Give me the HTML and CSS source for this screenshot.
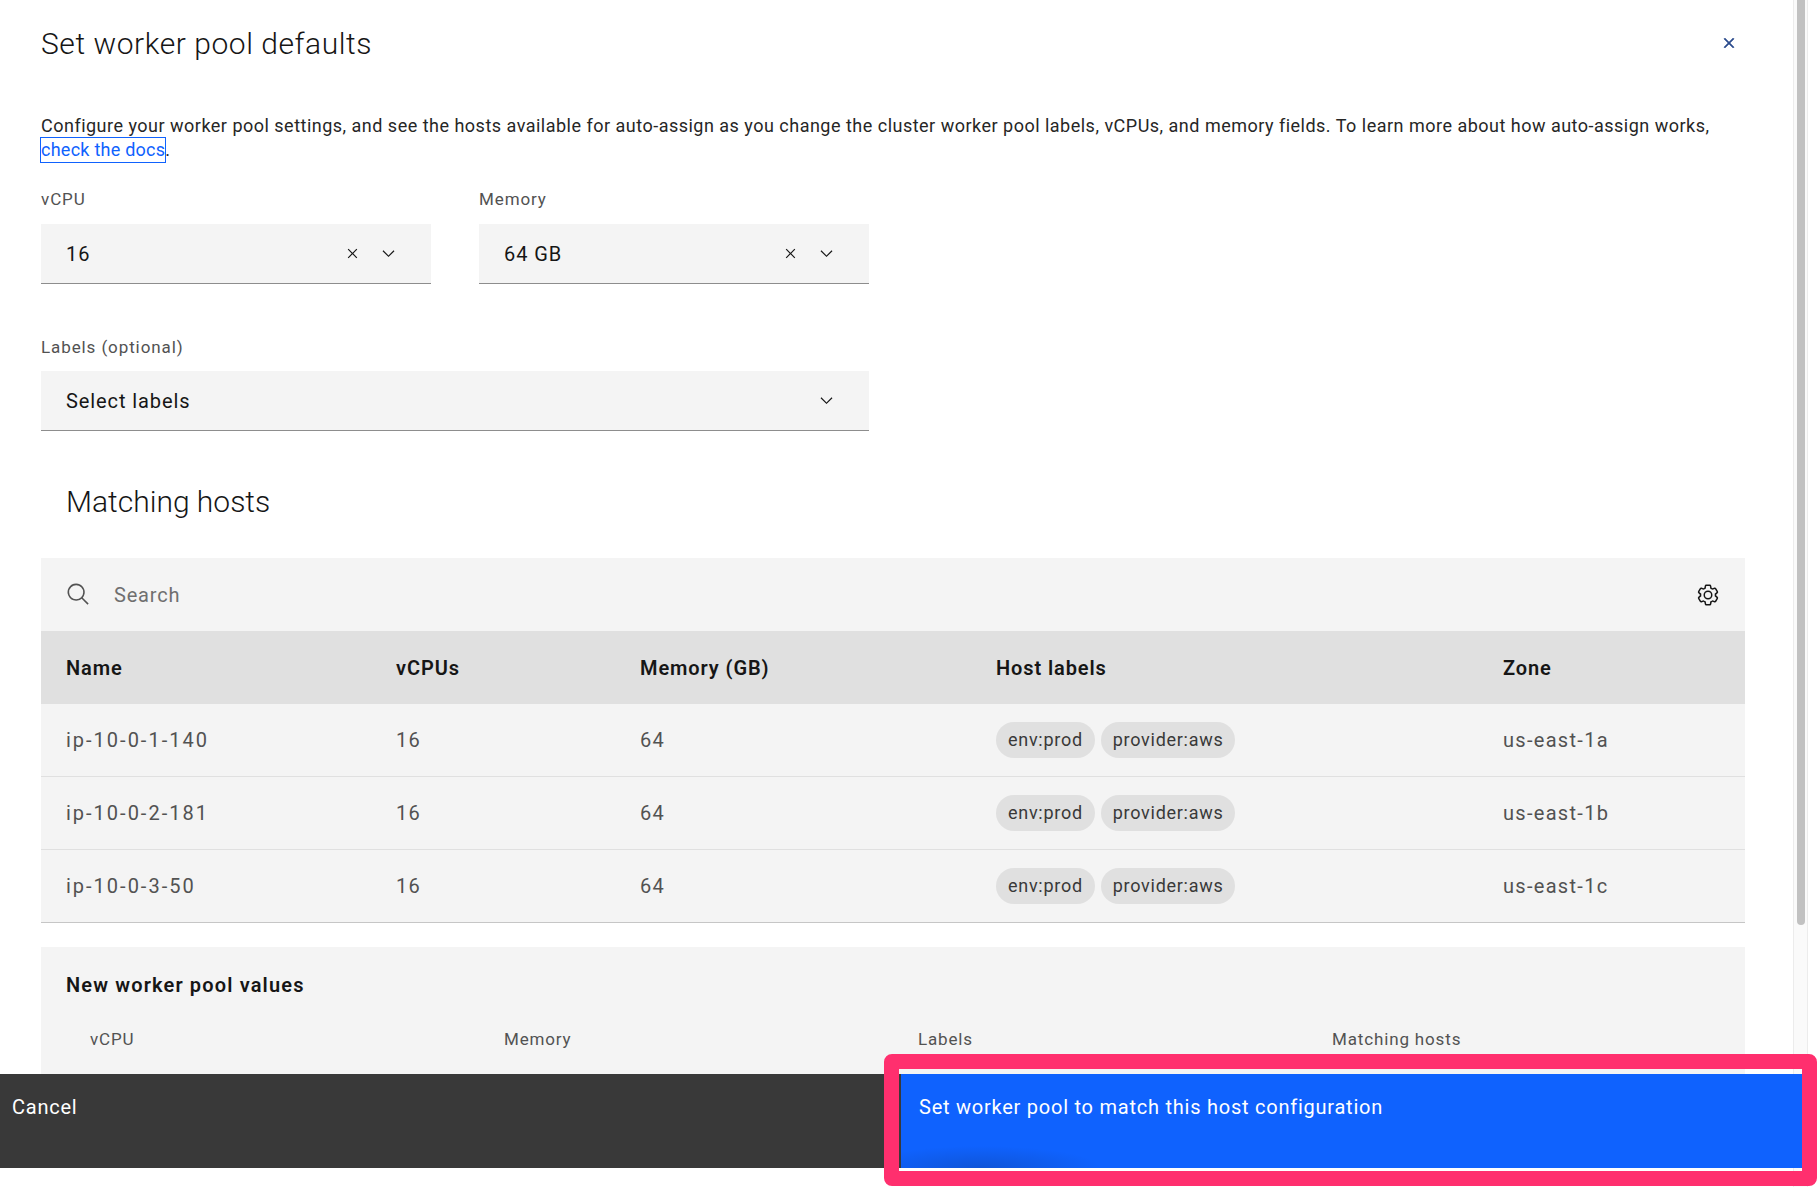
FILE: index.html
```html
<!DOCTYPE html>
<html>
<head>
    <title>Set worker pool defaults</title>
    <link rel="stylesheet" href="styles.css">
</head>
<body>
    <div class="modal">
        <div class="content">
            <div class="modal-head">
                <h1>Set worker pool defaults</h1>
                <svg class="close-icon" viewBox="0 0 32 32"><path d="M24 9.4L22.6 8 16 14.6 9.4 8 8 9.4 14.6 16 8 22.6 9.4 24 16 17.4 22.6 24 24 22.6 17.4 16 24 9.4z"/></svg>
            </div>
            <p class="intro">Configure your worker pool settings, and see the hosts available for auto-assign as you change the cluster worker pool labels, vCPUs, and memory fields. To learn more about how auto-assign works, <a class="docs-link" href="#">check the docs</a>.</p>

            <div class="field-row">
                <div class="field">
                    <label class="field-label">vCPU</label>
                    <div class="select">
                        <span class="select-value">16</span>
                        <svg class="small-icon" viewBox="0 0 32 32"><path d="M24 9.4L22.6 8 16 14.6 9.4 8 8 9.4 14.6 16 8 22.6 9.4 24 16 17.4 22.6 24 24 22.6 17.4 16 24 9.4z"/></svg>
                        <svg class="small-icon" viewBox="0 0 32 32"><path d="M16 22L6 12l1.4-1.4L16 19.2l8.6-8.6L26 12z"/></svg>
                    </div>
                </div>
                <div class="field">
                    <label class="field-label">Memory</label>
                    <div class="select">
                        <span class="select-value">64 GB</span>
                        <svg class="small-icon" viewBox="0 0 32 32"><path d="M24 9.4L22.6 8 16 14.6 9.4 8 8 9.4 14.6 16 8 22.6 9.4 24 16 17.4 22.6 24 24 22.6 17.4 16 24 9.4z"/></svg>
                        <svg class="small-icon" viewBox="0 0 32 32"><path d="M16 22L6 12l1.4-1.4L16 19.2l8.6-8.6L26 12z"/></svg>
                    </div>
                </div>
            </div>

            <div class="field field-wide">
                <label class="field-label">Labels (optional)</label>
                <div class="select">
                    <span class="select-value">Select labels</span>
                    <svg class="small-icon" viewBox="0 0 32 32"><path d="M16 22L6 12l1.4-1.4L16 19.2l8.6-8.6L26 12z"/></svg>
                </div>
            </div>

            <h2 class="section-title">Matching hosts</h2>

            <div class="toolbar">
                <svg class="search-icon" viewBox="0 0 32 32"><path d="M29,27.5859l-7.5521-7.5521a11.0177,11.0177,0,1,0-1.4141,1.4141L27.5859,29ZM4,13a9,9,0,1,1,9,9A9.01,9.01,0,0,1,4,13Z"/></svg>
                <span class="search-text">Search</span>
                <svg class="gear-icon" viewBox="0 0 32 32"><path d="M27,16.76c0-.25,0-.5,0-.76s0-.51,0-.77l1.92-1.68A2,2,0,0,0,29.3,11L26.94,7a2,2,0,0,0-1.73-1,2,2,0,0,0-.64.1l-2.43.82a11.35,11.35,0,0,0-1.31-.75l-.51-2.52a2,2,0,0,0-2-1.61H13.64a2,2,0,0,0-2,1.61l-.51,2.52a11.48,11.48,0,0,0-1.32.75L7.43,6.06A2,2,0,0,0,6.79,6,2,2,0,0,0,5.06,7L2.7,11a2,2,0,0,0,.41,2.51L5,15.24c0,.25,0,.5,0,.76s0,.51,0,.77L3.11,18.45A2,2,0,0,0,2.7,21L5.06,25a2,2,0,0,0,1.73,1,2,2,0,0,0,.64-.1l2.43-.82a11.35,11.35,0,0,0,1.31.75l.51,2.52a2,2,0,0,0,2,1.61h4.72a2,2,0,0,0,2-1.61l.51-2.52a11.48,11.48,0,0,0,1.32-.75l2.42.82a2,2,0,0,0,.64.1,2,2,0,0,0,1.73-1L29.3,21a2,2,0,0,0-.41-2.51ZM25.21,24l-3.43-1.16a8.86,8.86,0,0,1-2.71,1.57L18.36,28H13.64l-.71-3.55a9.36,9.36,0,0,1-2.7-1.57L6.79,24,4.43,20l2.72-2.4a8.9,8.9,0,0,1,0-3.13L4.43,12,6.79,8l3.43,1.16a8.86,8.86,0,0,1,2.71-1.57L13.64,4h4.72l.71,3.55a9.36,9.36,0,0,1,2.7,1.57L25.21,8,27.57,12l-2.72,2.4a8.9,8.9,0,0,1,0,3.13L27.57,20Z"/><path d="M16,22a6,6,0,1,1,6-6A5.94,5.94,0,0,1,16,22Zm0-10a3.91,3.91,0,0,0-4,4,3.91,3.91,0,0,0,4,4,3.91,3.91,0,0,0,4-4A3.91,3.91,0,0,0,16,12Z"/></svg>
            </div>

            <table class="hosts">
                <colgroup>
                    <col class="col-name"><col class="col-cpu"><col class="col-mem"><col class="col-labels"><col class="col-zone">
                </colgroup>
                <thead>
                    <tr><th>Name</th><th>vCPUs</th><th>Memory (GB)</th><th>Host labels</th><th>Zone</th></tr>
                </thead>
                <tbody>
                    <tr>
                        <td class="host-name">ip-10-0-1-140</td><td>16</td><td>64</td>
                        <td><div class="tags"><span class="tag">env:prod</span><span class="tag">provider:aws</span></div></td>
                        <td>us-east-1a</td>
                    </tr>
                    <tr>
                        <td class="host-name">ip-10-0-2-181</td><td>16</td><td>64</td>
                        <td><div class="tags"><span class="tag">env:prod</span><span class="tag">provider:aws</span></div></td>
                        <td>us-east-1b</td>
                    </tr>
                    <tr>
                        <td class="host-name">ip-10-0-3-50</td><td>16</td><td>64</td>
                        <td><div class="tags"><span class="tag">env:prod</span><span class="tag">provider:aws</span></div></td>
                        <td>us-east-1c</td>
                    </tr>
                </tbody>
            </table>

            <div class="values">
                <h3>New worker pool values</h3>
                <div class="values-grid">
                    <span>vCPU</span><span>Memory</span><span>Labels</span><span>Matching hosts</span>
                </div>
            </div>
        </div>

        <div class="scrollbar"><div class="thumb"></div></div>

        <div class="footer">
            <button class="btn btn-cancel">Cancel</button>
            <button class="btn btn-primary">Set worker pool to match this host configuration</button>
        </div>
        <div class="highlight"></div>
    </div>
</body>
</html>
```

FILE: styles.css
```css
* {
    box-sizing: border-box;
}

html, body {
    margin: 0;
    height: 100%;
    background-color: #fff;
    font-family: "Roboto", "Liberation Sans", sans-serif;
    color: #161616;
}

.modal {
    position: relative;
    width: 1818px;
    height: 1187px;
    overflow: hidden;
}

.content {
    width: 1793px;
    padding: 0 48px 0 41px;
}

.modal-head {
    display: flex;
    justify-content: space-between;
    align-items: center;
    height: 86px;
}

.modal-head h1 {
    margin: 0;
    font-size: 30px;
    font-weight: 300;
    letter-spacing: 0.55px;
}

.close-icon {
    width: 20px;
    height: 20px;
    margin-right: 6px;
    fill: #2a4a8c;
    stroke: #2a4a8c;
    stroke-width: 1;
}

.intro {
    margin: 28px 0 0;
    font-size: 18px;
    line-height: 24px;
    letter-spacing: 0.49px;
    color: #262626;
}

.docs-link {
    display: inline-block;
    color: #0f62fe;
    letter-spacing: 0.25px;
    text-decoration: none;
    outline: 1px solid #0f62fe;
}

.field-row {
    display: flex;
    gap: 48px;
    margin-top: 24px;
}

.field {
    width: 390px;
}

.field-wide {
    width: 828px;
    margin-top: 50px;
}

.field-wide .field-label {
    margin-bottom: 10px;
}

.field-label {
    display: block;
    height: 27px;
    margin-bottom: 11px;
    font-size: 17px;
    line-height: 27px;
    letter-spacing: 0.9px;
    color: #525252;
}

.select {
    display: flex;
    align-items: center;
    gap: 17px;
    height: 60px;
    padding: 0 33px 0 25px;
    background-color: #f4f4f4;
    border-bottom: 1px solid #8d8d8d;
}

.select-value {
    flex: 1;
    font-size: 20px;
    letter-spacing: 0.9px;
}

.small-icon {
    width: 19px;
    height: 19px;
    fill: #161616;
}

.section-title {
    margin: 0;
    padding: 49px 25px 0;
    height: 127px;
    font-size: 30px;
    font-weight: 300;
    line-height: 44px;
}

.toolbar {
    display: flex;
    align-items: center;
    height: 73px;
    padding: 0 25px;
    background-color: #f4f4f4;
}

.search-icon {
    width: 25px;
    height: 25px;
    fill: #525252;
}

.search-text {
    flex: 1;
    margin-left: 23px;
    padding-top: 1px;
    font-size: 20px;
    letter-spacing: 0.8px;
    color: #6f6f6f;
}

.gear-icon {
    width: 24px;
    height: 24px;
    fill: #161616;
}

.hosts {
    width: 100%;
    table-layout: fixed;
    border-collapse: separate;
    border-spacing: 0;
    background-color: #f4f4f4;
}

.col-name { width: 330px; }
.col-cpu { width: 244px; }
.col-mem { width: 356px; }
.col-labels { width: 507px; }

.hosts th {
    height: 73px;
    padding: 0 24px 0 25px;
    text-align: left;
    font-size: 20px;
    font-weight: 600;
    letter-spacing: 0.9px;
    background-color: #e0e0e0;
}

.hosts td {
    height: 73px;
    padding: 0 24px 0 25px;
    font-size: 20px;
    letter-spacing: 1.3px;
    color: #525252;
    border-bottom: 1px solid #e0e0e0;
}

.hosts td.host-name {
    letter-spacing: 2px;
}

.hosts tbody tr:last-child td {
    border-bottom-color: #c6c6c6;
}

.tags {
    display: flex;
    gap: 6px;
}

.tag {
    height: 36px;
    padding: 0 12px;
    border-radius: 18px;
    font-size: 18px;
    line-height: 36px;
    letter-spacing: 0.72px;
    color: #393939;
    background-color: #e0e0e0;
}

.values {
    margin-top: 24px;
    height: 200px;
    padding: 25px 24px 0 25px;
    background-color: #f4f4f4;
}

.values h3 {
    margin: 0;
    font-size: 20px;
    font-weight: 600;
    line-height: 26px;
    letter-spacing: 1.15px;
}

.values-grid {
    display: grid;
    grid-template-columns: repeat(4, 414px);
    margin-top: 31px;
    padding-left: 24px;
    font-size: 17px;
    letter-spacing: 0.85px;
    color: #525252;
}

.scrollbar {
    position: absolute;
    top: 0;
    left: 1793px;
    width: 15px;
    height: 1187px;
    padding: 0 3px;
    background-color: #fafafa;
    border-left: 1px solid #ececec;
    border-right: 1px solid #ececec;
}

.thumb {
    width: 8px;
    height: 925px;
    border-radius: 0 0 4px 4px;
    background-color: #c1c1c1;
}

.footer {
    position: absolute;
    left: 0;
    top: 1074px;
    display: grid;
    grid-template-columns: 901px 901px;
    height: 94px;
}

.btn {
    display: flex;
    align-items: flex-start;
    padding: 20px 0 0 12px;
    border: none;
    text-align: left;
    font-family: inherit;
    font-size: 20px;
    line-height: 26px;
    letter-spacing: 0.76px;
    color: #fff;
}

.btn-cancel {
    background-color: #393939;
}

.btn-primary {
    padding-left: 18px;
    background: radial-gradient(ellipse 120px 22px at 80px 100%, #0f55d8, #0f62fe) #0f62fe;
}

.highlight {
    position: absolute;
    left: 884px;
    top: 1054px;
    width: 933px;
    height: 132px;
    border: 15px solid #ff2f6e;
    border-radius: 8px;
}
```
